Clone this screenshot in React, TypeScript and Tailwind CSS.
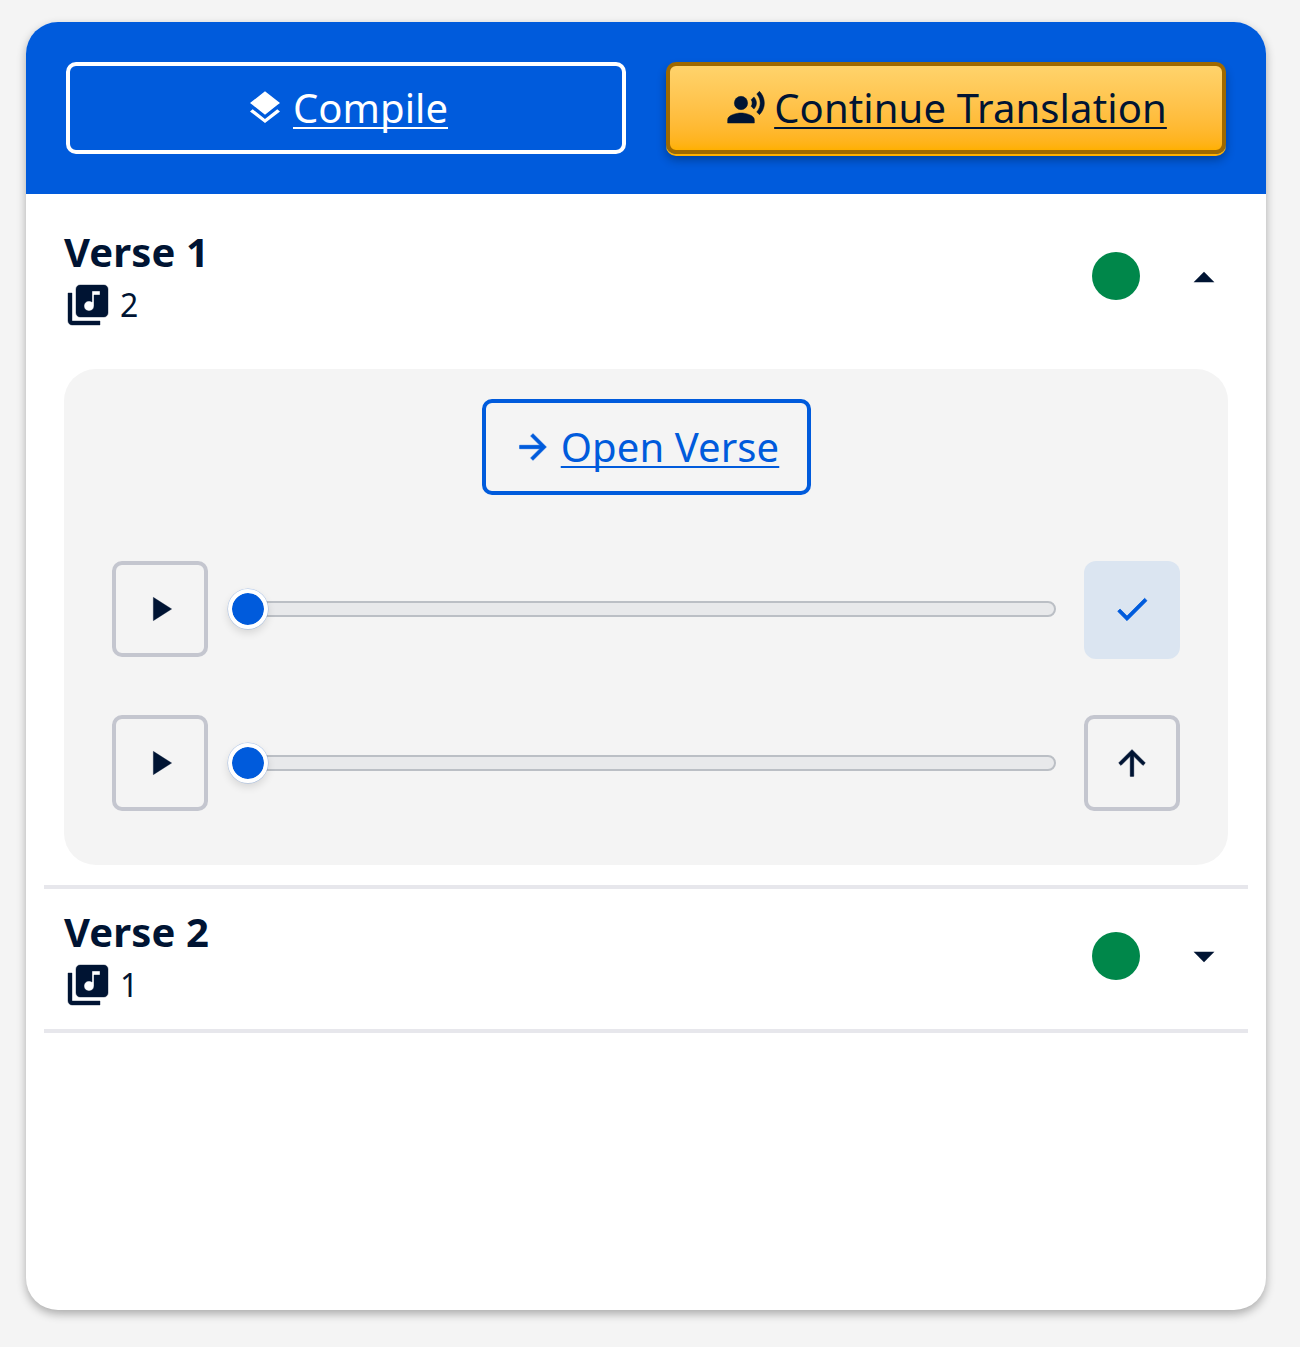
import type { ReactNode } from "react";
import {
  MdArrowDropDown,
  MdArrowDropUp,
  MdArrowForward,
  MdArrowUpward,
  MdCheck,
  MdLayers,
  MdLibraryMusic,
  MdPlayArrow,
  MdRecordVoiceOver,
} from "react-icons/md";

function Label({ children }: { children: ReactNode }) {
  return (
    <span className="whitespace-nowrap underline decoration-2 underline-offset-[4px] [text-decoration-skip-ink:none]">
      {children}
    </span>
  );
}

function VerseHeader({ title, count, open }: { title: string; count: number; open?: boolean }) {
  return (
    <div className="flex h-[140px] items-center justify-between px-5 pt-[14px] pb-5">
      <div className="flex h-full flex-col justify-between">
        <h2 className="text-[40px] leading-[57px] font-bold tracking-[0.1px]">{title}</h2>
        <div className="flex h-12 items-center gap-2 text-[32px] leading-none">
          <MdLibraryMusic size={48} className="[stroke-width:0.2]" />
          <span>{count}</span>
        </div>
      </div>
      <div className="flex items-center gap-[39px]">
        <span className="size-12 rounded-full bg-[#00874a]" />
        <button className="mr-[-1px]">
          {open ? (
            <MdArrowDropUp size={50} className="mt-[3px]" />
          ) : (
            <MdArrowDropDown size={50} className="mb-[1px]" />
          )}
        </button>
      </div>
    </div>
  );
}

function AudioRow({ selected }: { selected?: boolean }) {
  return (
    <div className="flex items-start">
      <button className="flex size-24 items-center justify-center rounded-[10px] border-4 border-[#c4c6cf]">
        <MdPlayArrow size={40} className="[stroke-width:0.2]" />
      </button>
      <div className="ml-5 flex h-24 flex-1 items-center">
        <div className="relative flex h-4 w-full items-center rounded-full border-2 border-[#bbbfc5] bg-[#e8e9eb]">
          <span className="absolute -left-0.5 size-10 rounded-full border-4 border-white bg-[#005bdc] bg-clip-padding shadow-[0_0_0_0.5px_rgba(0,91,220,0.3),0_4px_8px_rgba(0,0,0,0.12)]" />
        </div>
      </div>
      {selected ? (
        <button className="ml-7 flex h-[98px] w-24 items-center justify-center rounded-[12px] bg-[#dbe5f1] pb-0.5 text-[#005bdc]">
          <MdCheck size={40} className="[stroke-width:0.45]" />
        </button>
      ) : (
        <button className="ml-7 flex size-24 items-center justify-center rounded-[10px] border-4 border-[#c4c6cf]">
          <MdArrowUpward size={40} className="[stroke-width:0.45]" />
        </button>
      )}
    </div>
  );
}

export default function App() {
  return (
    <main className="h-[1347px] bg-[#f4f4f4] pt-[22px] pl-[26px] font-['Noto_Sans',sans-serif] text-[#001433] [&_path[fill=none]]:hidden">
      <div className="h-[1288px] w-[1240px] overflow-hidden rounded-[32px] bg-white shadow-[0_4px_10px_rgba(0,0,0,0.3)]">
        <header className="grid h-[172px] grid-cols-2 gap-10 bg-[#005bdc] p-10 text-[40px] leading-none">
          <button className="flex h-[92px] items-center justify-center gap-2 rounded-[10px] border-4 border-white pl-px tracking-[0.05px] text-white">
            <MdLayers size={40} />
            <Label>Compile</Label>
          </button>
          <button className="flex h-[92px] items-center justify-center gap-2 rounded-[10px] border-4 border-[#9f6900] bg-linear-to-b from-[#ffd36b] to-[#ffb000] pl-px tracking-[0.13px] shadow-[0_2px_0_#ffb000,0_6px_10px_rgba(0,0,0,0.3)]">
            <MdRecordVoiceOver size={40} className="[stroke-width:0.3]" />
            <Label>Continue Translation</Label>
          </button>
        </header>

        <section className="mx-[18px] border-b-4 border-[#e7e7ec] pt-[15px] pb-5">
          <VerseHeader title="Verse 1" count={2} open />
          <div className="mx-5 mt-5 flex h-[496px] flex-col items-center rounded-[32px] bg-[#f4f4f4] px-12 pt-[30px]">
            <button className="flex h-24 w-[329px] items-center justify-center gap-2 rounded-[10px] border-4 border-[#005bdc] text-[40px] leading-none tracking-[0.1px] text-[#005bdc]">
              <MdArrowForward size={40} className="[stroke-width:0.45]" />
              <Label>Open Verse</Label>
            </button>
            <div className="mt-[66px] flex w-full flex-col gap-14">
              <AudioRow selected />
              <AudioRow />
            </div>
          </div>
        </section>

        <section className="mx-[18px] border-b-4 border-[#e7e7ec]">
          <VerseHeader title="Verse 2" count={1} />
        </section>
      </div>
    </main>
  );
}
